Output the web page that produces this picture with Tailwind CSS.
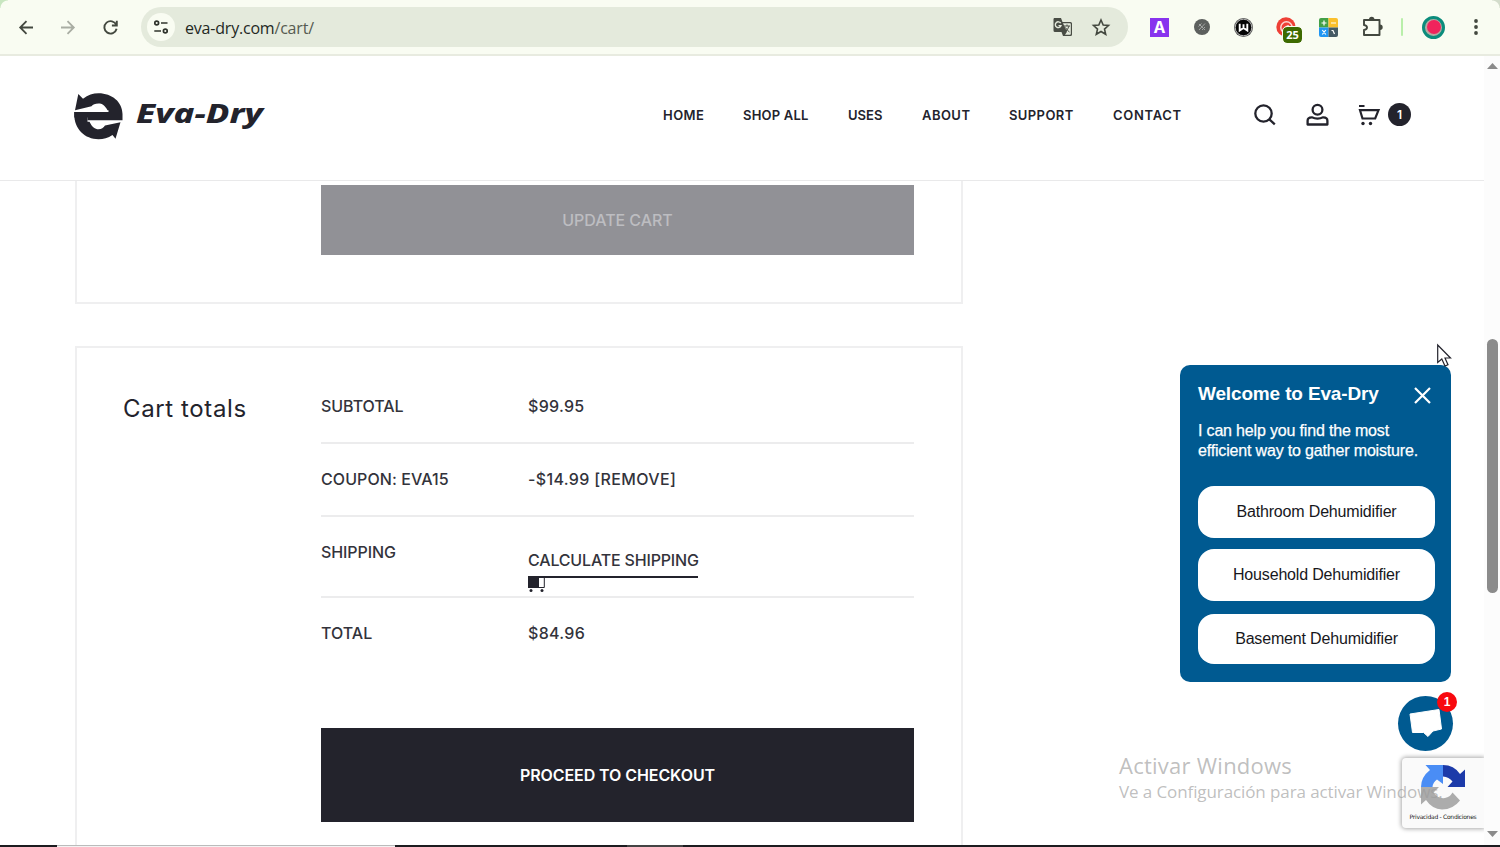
<!DOCTYPE html>
<html lang="en">
<head>
    <meta charset="UTF-8">
    <meta name="viewport" content="width=device-width, initial-scale=1.0">
    <title>Cart - Eva-Dry</title>
    <script src="https://cdn.jsdelivr.net/npm/@tailwindcss/browser@4"></script>
</head>
<body class="w-[1500px] h-[847px] overflow-hidden relative flex flex-col bg-white text-[#23232c] font-['Inter',sans-serif]">
    <!-- Browser toolbar -->
    <div class="h-14 shrink-0 bg-[#f9fcf2] border-b-2 border-[#e8ebe0] flex items-center relative">
        <div class="absolute top-0 left-0 w-2 h-2 bg-[radial-gradient(circle_at_100%_100%,#f9fcf2_7px,#c8e6c0_8px)]"></div>
        <div class="absolute top-0 right-0 w-2 h-2 bg-[radial-gradient(circle_at_0%_100%,#f9fcf2_7px,#d3dccb_8px)]"></div>
        <div class="flex items-center gap-[22px] pl-4 w-[141px] shrink-0">
            <svg class="w-5 h-5 shrink-0" viewBox="0 0 20 20" fill="none" stroke="#43483f" stroke-width="1.8"><path d="M17 10.500H4.500M10.500 4.200 4.200 10.500l6.300 6.300"/></svg>
            <svg class="w-5 h-5 shrink-0" viewBox="0 0 20 20" fill="none" stroke="#a9ada3" stroke-width="1.800"><path d="M3 10.500h12.500M9.500 4.200l6.300 6.300-6.300 6.300"/></svg>
            <svg class="w-5 h-5 shrink-0" viewBox="0 0 20 20" fill="none" stroke="#43483f" stroke-width="1.900"><path d="M16.300 8A6.200 6.200 0 1 0 16.600 11.800M16.800 3.700V8.500h-4.900"/></svg>
        </div>
        <div class="w-[987px] shrink-0 h-10 rounded-full bg-[#e4eadc] flex items-center pl-1.5 pr-[17px]">
            <div class="w-7 h-7 rounded-full bg-[#f9fcf2] flex items-center justify-center">
                <svg class="w-4 h-4" viewBox="0 0 16 16" fill="none" stroke="#30342d" stroke-width="1.700"><circle cx="3.700" cy="4" r="1.900"/><path d="M8 4h6.500M1.300 12H8"/><circle cx="12.300" cy="12" r="1.900"/></svg>
            </div>
            <div class="ml-[10px] mt-0.5 text-base leading-5 font-['Open_Sans',sans-serif] tracking-[-0.2px] text-[#23281f]">eva-dry.com<span class="text-[#565b51]">/cart/</span></div>
            <svg class="w-5 h-5 ml-auto" viewBox="0 0 20 20"><path d="M1 1h7l1.500 4H17.500q1.500 0 1.500 1.500V17.500q0 1.500-1.500 1.500H10l-1.500-4H2q-1.500 0-1.500-1.500V2Z" fill="#484c44"/><path d="M10 6.200h7q.8 0 .8.800v10q0 .8-.8.800h-5l2-3Z" fill="#e4eadc"/><path d="M11 9h6M14 7.500V9M16 9q-1 4-4 6M12.500 10.500q1.500 3 4 4.500" stroke="#484c44" fill="none"/><path d="M7.700 6.200A2.900 2.900 0 1 0 8 8.600H5.500" stroke="#e4eadc" stroke-width="1.400" fill="none"/></svg>
            <svg class="w-5 h-5 ml-[18px]" viewBox="0 0 20 20" fill="none" stroke="#43483f" stroke-width="1.600"><path d="m10 3 2.200 5 5.300.5-4 3.600 1.200 5.200-4.700-2.800-4.700 2.800 1.200-5.200-4-3.600L7.800 8Z"/></svg>
        </div>
        <!-- Extensions -->
        <div class="ml-[22px] w-[19px] h-[19px] bg-[#8833ee] flex items-center justify-center text-white text-base leading-5 font-bold">A</div>
        <svg class="w-4 h-4 ml-[25px]" viewBox="0 0 16 16"><circle cx="8" cy="8" r="8" fill="#5d605e"/><path d="m5 5 6 6M11 4.500 5 11M4.500 7.500l3-3M8 11l3-3" stroke="#a4a6a4" fill="none"/></svg>
        <svg class="w-[19px] h-[19px] ml-[24px]" viewBox="0 0 20 20"><circle cx="10" cy="10" r="10" fill="#555"/><circle cx="10" cy="10" r="8.700" fill="#050505" stroke="#ddd" stroke-width=".8"/><path d="M6 6V13.200L10 10.500l4 2.700V6M10 6.500V11" stroke="#fff" stroke-width="2" fill="none"/></svg>
        <div class="relative ml-[23px] w-5 h-5">
            <svg class="w-5 h-5" viewBox="0 0 20 20"><circle cx="10" cy="10" r="9.700" fill="#ee4036"/><circle cx="10.500" cy="10.500" r="5.700" fill="none" stroke="#f8d8d3" stroke-width="1.500"/><path d="M8 13q1-5 5-5-1 5-5 5" fill="#f8d8d3"/></svg>
            <div class="absolute left-[7px] top-2.5 w-[19px] h-4 rounded bg-[#3d6a00] outline outline-[#f9fcf2] text-white text-[11px] leading-4 font-bold text-center font-['Open_Sans',sans-serif]">25</div>
        </div>
        <svg class="ml-[23px] w-[19px] h-[19px]" viewBox="0 0 19 19">
            <path d="M2 0h7.500v9.500H0V2q0-2 2-2Z" fill="#43a047"/><path d="M9.500 0H17q2 0 2 2v7.500H9.500Z" fill="#fbc02d"/><path d="M0 9.500h9.500V19H2q-2 0-2-2Z" fill="#2196f3"/><path d="M9.500 9.500H19V17q0 2-2 2H9.500Z" fill="#455a64"/>
            <path d="M5 2.500v5M2.500 5h5M12 5h5M3.300 12l3.500 4.500M6.800 12l-3.500 4.500M12.500 12.500h1.500l1.500 3.500" stroke="#fff" stroke-width="1.200" fill="none"/>
        </svg>
        <svg class="w-[22px] h-[22px] ml-6" viewBox="0 0 22 22"><path d="M2 4h15.500v15H2v-5q3-.5 3-2.500T2 9Z" fill="none" stroke="#43483f" stroke-width="1.900" stroke-linejoin="round"/><path d="M7 3.500a2.700 2.700 0 0 1 5.400 0ZM18 8.500a2.700 2.700 0 0 1 0 5.400Z" fill="#43483f"/></svg>
        <div class="w-0.5 h-[18px] ml-[17px] bg-[#b9efaa] rounded"></div>
        <div class="w-[23px] h-[23px] ml-[19px] rounded-full bg-[#b5aaa3] border-[3px] border-[#0b8c7c] flex items-center justify-center"><div class="w-3.5 h-3.5 rounded-full bg-[#f0245c]"></div></div>
        <svg class="w-1 h-[18px] ml-[29px]" viewBox="0 0 4 18" fill="#43483f"><circle cx="2" cy="3" r="1.900"/><circle cx="2" cy="9" r="1.900"/><circle cx="2" cy="15" r="1.900"/></svg>
    </div>

    <div class="flex h-[789px] shrink-0">
        <div class="w-[1484px] flex flex-col overflow-hidden">
            <!-- Site header -->
            <header class="h-[125px] shrink-0 border-b border-[#e9e9ea] flex items-center pl-[74px]">
                <svg class="w-[192px] h-12 -mt-1" viewBox="0 0 192 48" fill="#23232c">
                    <path d="M4.300 2 9 6.700C14 2.800 19 1.200 24.500 1.200 38 1.200 48.500 10 48.500 22V28.200H13.500V25.500H.3V20H34.500V18.300H33.500C31 13.500 28 11.600 24.500 11.600 21 11.600 19 12.500 17.500 14.200L1 18.200Z"/>
                    <path d="M.3 20H13.500V29.700H15.500C18 35 21 37.200 24.500 37.200 27.500 37.200 29.500 36 31 33.600L46.500 30.200 41.500 46.700 38.500 43C34 46 29.500 47.200 24.500 47.200 11 47.200 0 37 .3 22Z"/>
                    <text x="62" y="31" font-family="Noto Sans" font-weight="800" font-style="italic" font-size="27" textLength="127" lengthAdjust="spacingAndGlyphs">Eva-Dry</text>
                </svg>
                <nav class="ml-[396px] -mt-1.5 flex text-[13px] leading-5 font-semibold whitespace-nowrap">
                    <a class="w-[81px] pl-px tracking-[0.45px]">HOME</a>
                    <a class="w-[105px] tracking-[0.2px]">SHOP ALL</a>
                    <a class="w-[74px]">USES</a>
                    <a class="w-[87px] tracking-[0.45px]">ABOUT</a>
                    <a class="w-[104px] tracking-[0.4px]">SUPPORT</a>
                    <a class="w-[140px] tracking-[0.7px]">CONTACT</a>
                </nav>
                <div class="flex items-center -mt-2">
                    <svg class="w-6 h-6" viewBox="0 0 24 24" fill="none" stroke="#23232c" stroke-width="2.300"><circle cx="10.500" cy="11.500" r="8.200"/><path d="m16.300 17.300 5.500 5"/></svg>
                    <svg class="w-6 h-6 ml-7" viewBox="0 0 24 24" fill="none" stroke="#23232c" stroke-width="2.300" stroke-linejoin="round"><circle cx="12.500" cy="7.800" r="4.900"/><path d="M6.800 15.300q5.700 2.600 11.400 0 4.200 0 4.200 3.500v3.700H2.600v-3.700q0-3.500 4.200-3.500Z"/></svg>
                    <svg class="w-6 h-6 ml-7" viewBox="0 0 24 24" fill="none" stroke="#23232c" stroke-width="2.200"><path d="M2 4h5.500M3 8.200h18.500l-3.300 8.300H5.500Z"/><circle cx="6" cy="21.500" r="1.700" fill="#23232c" stroke="none"/><circle cx="13.500" cy="21.500" r="1.700" fill="#23232c" stroke="none"/></svg>
                    <span class="ml-[7px] w-[23px] h-[23px] rounded-full bg-[#23232c] text-white text-xs leading-[23px] text-center font-semibold">1</span>
                </div>
            </header>

            <main class="pl-[75px] flex flex-col flex-1">
                <!-- Cart items card, scrolled -->
                <section class="w-[888px] h-[123px] shrink-0 border-2 border-t-0 border-[#efeff0] pt-[4px] pl-[244px]">
                    <button class="block w-[593px] h-[70px] bg-[#919196] text-[#bdbdc1] font-medium text-base leading-[70px] text-center"><span class="tracking-[-0.05px]">UPDATE CART</span></button>
                </section>

                <!-- Cart totals card -->
                <section class="mt-[42px] w-[888px] h-[560px] shrink-0 border-2 border-[#efeff0] flex pl-[46px]">
                    <h2 class="w-[198px] pt-[43px] text-2xl leading-9"><span class="tracking-[0.62px]">Cart totals</span></h2>
                    <div class="w-[593px] pt-[21px] text-base leading-6 font-medium text-[#33333b]">
                        <div class="h-[75px] border-b-2 border-[#ececed] flex pt-[25px]"><span class="w-[207px]"><span class="tracking-[-0.05px]">SUBTOTAL</span></span><span class="tracking-[0.3px]">$99.95</span></div>
                        <div class="h-[73px] border-b-2 border-[#ececed] flex pt-[23px]"><span class="w-[207px]"><span class="tracking-[0.08px]">COUPON: EVA15</span></span><span class="tracking-[0.35px]">-$14.99 [REMOVE]</span></div>
                        <div class="h-[81px] border-b-2 border-[#ececed] flex pt-[23px]">
                            <span class="w-[207px]"><span class="tracking-[-0.1px]">SHIPPING</span></span>
                            <div class="pt-2">
                                <div class="w-[170px] h-[30px] border-b-2 border-[#23232c] whitespace-nowrap"><span class="tracking-[-0.17px]">CALCULATE SHIPPING</span></div>
                                <svg class="w-[18px] h-4 -mt-px" viewBox="0 0 18 16"><path d="M0 0h11v11H0Z" fill="#23232c"/><path d="M10 0h6.300v10.500H1" fill="none" stroke="#23232c" stroke-width="1"/><circle cx="3" cy="13.500" r="1.500" fill="#23232c"/><circle cx="14" cy="13.500" r="1.500" fill="#23232c"/></svg>
                            </div>
                        </div>
                        <div class="h-[130px] flex pt-[23px]"><span class="w-[207px]"><span>TOTAL</span></span><span class="tracking-[0.3px]">$84.96</span></div>
                        <button class="block w-[593px] h-[94px] bg-[#23232c] text-white font-semibold text-base leading-[94px] text-center"><span class="tracking-[-0.08px]">PROCEED TO CHECKOUT</span></button>
                    </div>
                </section>
            </main>
        </div>

        <!-- Scrollbar -->
        <div class="w-4 bg-[#fcfcfc] flex flex-col items-end pr-0.5">
            <svg class="w-[11px] h-[6px] mt-[7px]" viewBox="0 0 11 6"><path d="M0 6 5.500 0 11 6Z" fill="#8b8b8b"/></svg>
            <div class="mt-[270px] w-[11px] h-[254px] rounded-full bg-[#8b8b8b]"></div>
            <svg class="w-[11px] h-[6px] mt-[238px]" viewBox="0 0 11 6"><path d="M0 0 5.500 6 11 0Z" fill="#8b8b8b"/></svg>
        </div>
    </div>

    <!-- Taskbar edge -->
    <div class="h-0.5 shrink-0 flex bg-[#1c1c20]"><div class="ml-[57px] w-[338px] bg-[#f3f3f3] border-t border-[#bbb]"></div><div class="ml-[232px] w-14 bg-[#444]"></div></div>

    <!-- Chat panel -->
    <aside class="absolute left-[1180px] top-[365px] w-[271px] h-[317px] rounded-[10px] bg-[#005a91] pl-[18px] pr-4 pt-[17px] text-white font-['Liberation_Sans',sans-serif]">
        <div class="flex justify-between">
            <h3 class="font-bold text-[19px] leading-6 tracking-[-0.15px] whitespace-nowrap">Welcome to Eva-Dry</h3>
            <svg class="w-[17px] h-[17px] mt-[5px] mr-1" viewBox="0 0 17 17" stroke="#fff" stroke-width="2.200"><path d="m1 1 15 15M16 1 1 16"/></svg>
        </div>
        <p class="mt-[15px] text-base leading-5 tracking-[-0.17px] [-webkit-text-stroke:0.25px_white] whitespace-nowrap">I can help you find the most<br>efficient way to gather moisture.</p>
        <div class="mt-[25px] flex flex-col text-base tracking-[-0.17px] text-[#17171c] text-center">
            <button class="h-[52px] rounded-[16px] bg-white">Bathroom Dehumidifier</button>
            <button class="mt-[11px] h-[52px] rounded-[16px] bg-white">Household Dehumidifier</button>
            <button class="mt-[13px] h-[50px] rounded-[16px] bg-white">Basement Dehumidifier</button>
        </div>
    </aside>
    <div class="absolute left-[1398px] top-[696px] w-[55px] h-[55px] rounded-full bg-[#005a91]">
        <svg class="w-[55px] h-[55px]" viewBox="0 0 55 55"><path d="M12 18 41 13.500 43.500 33 35 35 30 40.500 25.500 36.500 14.500 36.500Z" fill="#fff" stroke="#fff" stroke-linejoin="round"/></svg>
    </div>
    <div class="absolute left-[1437px] top-[692px] w-5 h-5 rounded-full bg-[#f8090f] text-white text-xs leading-5 font-bold text-center font-['Liberation_Sans',sans-serif]">1</div>

    <!-- reCAPTCHA badge -->
    <div class="absolute left-[1402px] top-[758px] w-[82px] h-[70px] rounded-l-sm bg-[#fafafa] shadow-[0_0_4px_1px_#aaa] [clip-path:inset(-6px_0_-6px_-6px)] flex flex-col items-center">
        <svg class="w-[44px] h-[45px] mt-[7px]" viewBox="0 0 44 45">
            <path d="M22 0Q33 0 39 9L44 4.500V22H26.500L31.500 16.500Q28 12 22 11.500Z" fill="#1c3aa9"/>
            <path d="M22 0H4.500L9 5Q0 12 0 22H11.500Q12 17 16 14.500L22 19Z" fill="#4a8df5"/>
            <path d="M0 22H18L12.500 27.500Q17 34 24 33 29 32 31.500 27.500L39 35.500Q32 44.500 21 44.500 11 44 5 35L0 39.500Z" fill="#acacac"/>
        </svg>
        <div class="mt-0.5 text-[6px] leading-[9px] tracking-[-0.28px] whitespace-nowrap text-[#222] font-['DejaVu_Sans',sans-serif]">Privacidad - Condiciones</div>
    </div>

    <!-- Windows activation watermark -->
    <div class="absolute left-[1119px] top-[750px] text-[#9b9b9b]/65 whitespace-nowrap font-['Open_Sans',sans-serif]">
        <div class="text-[22px] leading-[30px] tracking-[0.25px]">Activar Windows</div>
        <div class="text-[17px] leading-6 tracking-[-0.1px]">Ve a Configuración para activar Windows.</div>
    </div>

    <!-- Mouse pointer -->
    <svg class="absolute left-[1436px] top-[343px] w-[18px] h-6" viewBox="0 0 18 24"><path d="M1.700 2V19.500L5.800 16 9 23l3-1.300L9 15h5.500Z" fill="#fff" stroke="#23232c" stroke-width="1.200"/></svg>
</body>
</html>
